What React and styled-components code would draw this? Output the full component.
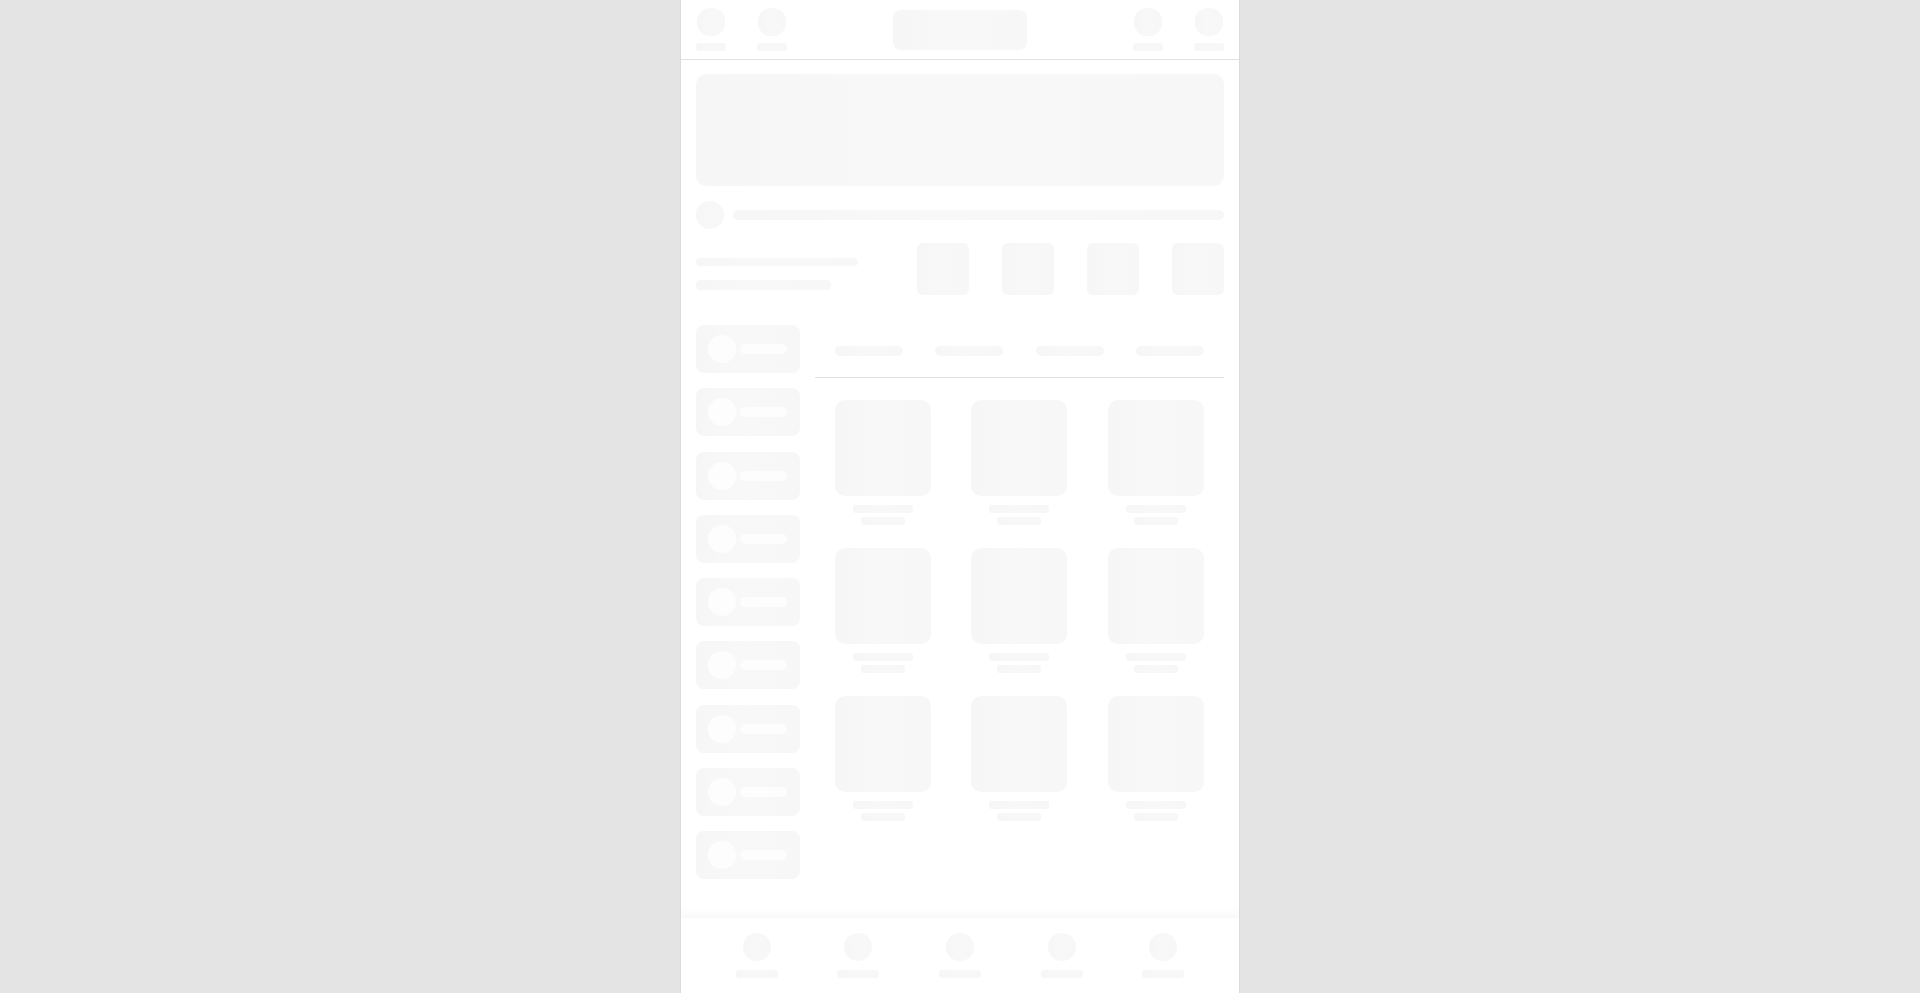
import React from "react";
import styled, { createGlobalStyle, css } from "styled-components";

const GlobalStyle = createGlobalStyle`
    html, body {
        margin: 0;
        padding: 0;
        height: 100%;
        background: #e4e4e4;
        font-family: Inter, "Noto Sans", sans-serif;
    }
    #root {
        height: 100%;
    }
    * {
        box-sizing: border-box;
    }
`;

// shared look of every loading placeholder
const bone = css`
    background: linear-gradient(90deg, #f6f6f6 0%, #f8f8f8 40%, #f7f7f7 100%);
    flex-shrink: 0;
`;

const Shell = styled.div`
    width: 560px;
    height: 100vh;
    margin: 0 auto;
    background: #ffffff;
    border-left: 1px solid #dadada;
    border-right: 1px solid #dadada;
    display: flex;
    flex-direction: column;
    overflow: hidden;
`;

/* ---------- header ---------- */

const Header = styled.header`
    height: 60px;
    flex-shrink: 0;
    border-bottom: 1px solid #e2e2e2;
    padding: 0 15px;
    display: grid;
    grid-template-columns: 1fr auto 1fr;
    align-items: center;
`;

const IconGroup = styled.div`
    display: flex;
    gap: 31px;
    justify-content: ${(p) => (p.$end ? "flex-end" : "flex-start")};
`;

const HeaderItem = styled.div`
    width: 30px;
    display: flex;
    flex-direction: column;
    align-items: center;
    gap: 7px;
`;

const HeaderIcon = styled.div`
    ${bone};
    width: 28px;
    height: 28px;
    border-radius: 13px;
`;

const HeaderLabel = styled.div`
    ${bone};
    width: 30px;
    height: 8px;
    border-radius: 3px;
`;

const SearchBox = styled.div`
    ${bone};
    width: 134px;
    height: 40px;
    border-radius: 8px;
`;

/* ---------- content ---------- */

const Main = styled.main`
    flex: 1;
    overflow: hidden;
    padding: 14px 15px 0;
`;

const Banner = styled.div`
    ${bone};
    height: 112px;
    border-radius: 10px;
`;

const NoticeRow = styled.div`
    margin-top: 15px;
    display: flex;
    align-items: center;
    gap: 9px;
`;

const Dot = styled.div`
    ${bone};
    width: 28px;
    height: 28px;
    border-radius: 50%;
`;

const NoticeBar = styled.div`
    ${bone};
    flex: 1;
    height: 10px;
    border-radius: 5px;
`;

const Stats = styled.section`
    margin-top: 14px;
    height: 52px;
    display: flex;
    justify-content: space-between;
    align-items: center;
`;

const StatText = styled.div`
    display: flex;
    flex-direction: column;
    gap: 14px;
    padding-top: 10px;
`;

const TextLine = styled.div`
    ${bone};
    width: ${(p) => p.$w}px;
    height: ${(p) => p.$h || 8}px;
    border-radius: 4px;
`;

const StatTiles = styled.div`
    display: flex;
    gap: 33px;
`;

const StatTile = styled.div`
    ${bone};
    width: 52px;
    height: 52px;
    border-radius: 6px;
`;

const Body = styled.div`
    margin-top: 30px;
    display: flex;
    gap: 15px;
`;

const Sidebar = styled.nav`
    width: 104px;
    flex-shrink: 0;
    display: flex;
    flex-direction: column;
    gap: 15.3px;
`;

const SideCard = styled.div`
    ${bone};
    height: 48px;
    border-radius: 8px;
    padding: 0 13px 0 12px;
    display: flex;
    align-items: center;
    gap: 4px;
`;

const SideDot = styled.div`
    width: 28px;
    height: 28px;
    border-radius: 50%;
    background: #fdfdfd;
    flex-shrink: 0;
`;

const SideBar = styled.div`
    flex: 1;
    height: 10px;
    border-radius: 5px;
    background: #fdfdfd;
`;

const Content = styled.div`
    flex: 1;
    min-width: 0;
`;

const Tabs = styled.div`
    height: 53px;
    padding: 0 4px;
    display: flex;
    align-items: center;
    border-bottom: 1px solid #e0e0e0;
`;

const Tab = styled.div`
    flex: 1;
    display: flex;
    justify-content: center;
`;

const TabLabel = styled.div`
    ${bone};
    width: 68px;
    height: 10px;
    border-radius: 5px;
`;

const Grid = styled.div`
    margin-top: 22px;
    display: grid;
    grid-template-columns: repeat(3, 1fr);
    row-gap: 23px;
`;

const Product = styled.div`
    display: flex;
    flex-direction: column;
    align-items: center;
`;

const ProductImage = styled.div`
    ${bone};
    width: 96px;
    height: 96px;
    border-radius: 10px;
`;

const ProductName = styled.div`
    ${bone};
    margin-top: 9px;
    width: 60px;
    height: 8px;
    border-radius: 3px;
`;

const ProductPrice = styled.div`
    ${bone};
    margin-top: 4px;
    width: 44px;
    height: 8px;
    border-radius: 3px;
`;

/* ---------- bottom navigation ---------- */

const BottomNav = styled.footer`
    position: relative;
    z-index: 1;
    height: 75px;
    flex-shrink: 0;
    background: #ffffff;
    box-shadow: 0 -4px 8px rgba(0, 0, 0, 0.035);
    padding: 15px 25px 0;
    display: grid;
    grid-template-columns: repeat(5, 1fr);
`;

const NavItem = styled.div`
    display: flex;
    flex-direction: column;
    align-items: center;
    gap: 9px;
`;

const NavIcon = styled.div`
    ${bone};
    width: 28px;
    height: 28px;
    border-radius: 50%;
`;

const NavLabel = styled.div`
    ${bone};
    width: 42px;
    height: 8px;
    border-radius: 3px;
`;

const range = (n) => Array.from({ length: n }, (_, i) => i);

function HeaderButton() {
    return (
        <HeaderItem>
            <HeaderIcon />
            <HeaderLabel />
        </HeaderItem>
    );
}

export default function App() {
    return (
        <>
            <GlobalStyle />
            <Shell>
                <Header>
                    <IconGroup>
                        <HeaderButton />
                        <HeaderButton />
                    </IconGroup>
                    <SearchBox />
                    <IconGroup $end>
                        <HeaderButton />
                        <HeaderButton />
                    </IconGroup>
                </Header>

                <Main>
                    <Banner />

                    <NoticeRow>
                        <Dot />
                        <NoticeBar />
                    </NoticeRow>

                    <Stats>
                        <StatText>
                            <TextLine $w={162} $h={8} />
                            <TextLine $w={135} $h={10} />
                        </StatText>
                        <StatTiles>
                            {range(4).map((i) => (
                                <StatTile key={i} />
                            ))}
                        </StatTiles>
                    </Stats>

                    <Body>
                        <Sidebar>
                            {range(9).map((i) => (
                                <SideCard key={i}>
                                    <SideDot />
                                    <SideBar />
                                </SideCard>
                            ))}
                        </Sidebar>

                        <Content>
                            <Tabs>
                                {range(4).map((i) => (
                                    <Tab key={i}>
                                        <TabLabel />
                                    </Tab>
                                ))}
                            </Tabs>
                            <Grid>
                                {range(9).map((i) => (
                                    <Product key={i}>
                                        <ProductImage />
                                        <ProductName />
                                        <ProductPrice />
                                    </Product>
                                ))}
                            </Grid>
                        </Content>
                    </Body>
                </Main>

                <BottomNav>
                    {range(5).map((i) => (
                        <NavItem key={i}>
                            <NavIcon />
                            <NavLabel />
                        </NavItem>
                    ))}
                </BottomNav>
            </Shell>
        </>
    );
}
